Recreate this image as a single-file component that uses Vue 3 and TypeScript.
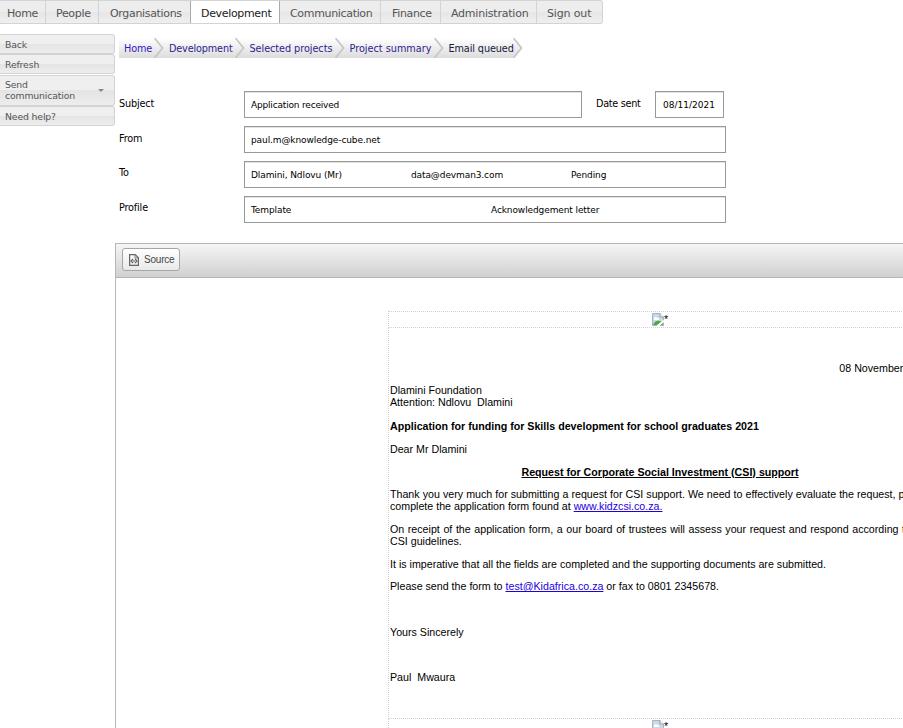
<script setup lang="ts">
interface NavItem {
  label: string
  key: string
  active?: boolean
}

const navItems: NavItem[] = [
  { label: 'Home', key: 'home' },
  { label: 'People', key: 'people' },
  { label: 'Organisations', key: 'organisations' },
  { label: 'Development', key: 'development', active: true },
  { label: 'Communication', key: 'communication' },
  { label: 'Finance', key: 'finance' },
  { label: 'Administration', key: 'administration' },
  { label: 'Sign out', key: 'signout' },
]

const crumbs: { label: string; key: string }[] = [
  { label: 'Home', key: 'home' },
  { label: 'Development', key: 'development' },
  { label: 'Selected projects', key: 'selected' },
  { label: 'Project summary', key: 'summary' },
  { label: 'Email queued', key: 'current' },
]
</script>

<template>
  <div class="page">
    <nav class="topnav">
      <a v-for="item in navItems" :key="item.key" class="tab" :class="['tab-' + item.key, { active: item.active }]">{{ item.label }}</a>
    </nav>

    <div class="body">
      <aside class="side">
        <a class="side-item">Back</a>
        <a class="side-item">Refresh</a>
        <a class="side-item tall">Send<br />communication<i class="caret"></i></a>
        <a class="side-item">Need help?</a>
      </aside>

      <main class="main">
        <div class="crumbs">
          <span v-for="c in crumbs" :key="c.key" class="crumb" :class="'crumb-' + c.key">
            <span class="crumb-text">{{ c.label }}</span>
            <svg class="chevron" width="10" height="20" viewBox="0 0 10 20">
              <path v-if="c.key === 'current'" d="M0 0L9 10L0 20H10V0Z" fill="#fff" />
              <path d="M0.5 0L8.5 10L0.5 20" fill="none" stroke="#c6c6c6" stroke-width="1.7" />
            </svg>
          </span>
        </div>

        <div class="form">
          <div class="row">
            <label class="label">Subject</label>
            <div class="field subject"><span>Application received</span></div>
            <label class="date-label">Date sent</label>
            <div class="field date"><span>08/11/2021</span></div>
          </div>
          <div class="row">
            <label class="label">From</label>
            <div class="field wide"><span>paul.m@knowledge-cube.net</span></div>
          </div>
          <div class="row">
            <label class="label up">To</label>
            <div class="field wide thirds"><span>Dlamini, Ndlovu (Mr)</span><span>data@devman3.com</span><span>Pending</span></div>
          </div>
          <div class="row">
            <label class="label up">Profile</label>
            <div class="field wide halves"><span>Template</span><span>Acknowledgement letter</span></div>
          </div>
        </div>

        <section class="editor">
          <div class="toolbar">
            <button class="source">
              <svg width="12" height="12" viewBox="0 0 12 12" fill="none" stroke="#666" stroke-width="1.2">
                <path d="M1.6 .6H7.2L10.4 3.8V11.4H1.6Z" />
                <path d="M7 1V4H10" stroke-width=".8" />
                <path d="M5 5L3 7L5 9M7 5L9 7L7 9" stroke-width="1.2" />
                <path d="M5.3 7H6.7" stroke-width="1.4" />
              </svg>
              <span>Source</span>
            </button>
          </div>
          <div class="canvas">
            <div class="letter">
              <div class="cell image-row">
                <svg class="broken" width="12" height="13" viewBox="0 0 12 13">
                  <path d="M.5 .5H8L11.5 4V8L5 12.5H.5Z" fill="#c8d8f0" />
                  <path d="M2 5.5Q3 3 5 4.5L7 5.5V7H2Z" fill="#fff" />
                  <path d="M1 12Q3 7 8 8L10 9L5 12.5H1Z" fill="#4dab3a" />
                  <path d="M8 12.5L11.5 9V12.5Z" fill="#6daf5e" />
                  <path d="M.5 12.5V.5H8L11.5 4V7.5M11.5 10V12.5H8M.5 12.5H5" fill="none" stroke="#aeb1b5" />
                  <path d="M8 .5V4H11.5" fill="#fff" stroke="#999" />
                  <path d="M5 13L12 7.7" stroke="#fff" stroke-width="1.5" />
                </svg><span>*</span>
              </div>
              <div class="cell content">
                <p class="right">08 November 2021</p>
                <p class="address">Dlamini Foundation<br />Attention: Ndlovu&nbsp; Dlamini</p>
                <p><b>Application for funding for Skills development for school graduates 2021</b></p>
                <p>Dear Mr Dlamini</p>
                <p class="center"><b><u>Request for Corporate Social Investment (CSI) support</u></b></p>
                <p>Thank you very much for submitting a request for CSI support. We need to effectively evaluate the request, please complete the application form found at <a>www.kidzcsi.co.za.</a></p>
                <p>On receipt of the application form, a our board of trustees will assess your request and respond according to our CSI guidelines.</p>
                <p>It is imperative that all the fields are completed and the supporting documents are submitted.</p>
                <p>Please send the form to <a>test@Kidafrica.co.za</a> or fax to 0801 2345678.</p>
                <p>&nbsp;</p>
                <p>Yours Sincerely</p>
                <p>&nbsp;</p>
                <p>Paul&nbsp; Mwaura</p>
              </div>
              <div class="cell image-row">
                <svg class="broken" width="12" height="13" viewBox="0 0 12 13">
                  <path d="M.5 .5H8L11.5 4V12.5H.5Z" fill="#c8d8f0" stroke="#aeb1b5" />
                  <path d="M2 5.5Q3 3 5 4.5L7 5.5V7H2Z" fill="#fff" />
                  <path d="M8 .5V4H11.5" fill="#fff" stroke="#999" />
                </svg><span>*</span>
              </div>
            </div>
          </div>
        </section>
      </main>
    </div>
  </div>
</template>

<style>
body {
  margin: 0;
  overflow: hidden;
  background: #fff;
}
</style>

<style scoped>
* {
  box-sizing: border-box;
}
.page {
  width: 903px;
  height: 728px;
  overflow: hidden;
  font-family: 'DejaVu Sans', Verdana, sans-serif;
  color: #000;
}
.topnav {
  display: flex;
  width: 603px;
  height: 24px;
  border: 1px solid #d3d3d3;
  border-left: 0;
  border-radius: 0 3px 3px 0;
  background: linear-gradient(#ededed 0 50%, #e6e6e6 50%, #efefef);
  overflow: hidden;
}
.tab {
  flex: none;
  height: 24px;
  margin-top: -1px;
  padding-left: 10px;
  border-right: 1px solid #d3d3d3;
  font-size: 11px;
  letter-spacing: -0.33px;
  line-height: 27px;
  color: #555;
  white-space: nowrap;
}
.tab-home { width: 46px; padding-left: 7px; letter-spacing: -0.4px; }
.tab-people { width: 53px; }
.tab-organisations { width: 92px; border-right: 0; padding-left: 11px; }
.tab-development { width: 90px; margin-left: -1px; }
.tab-communication { width: 101px; }
.tab-finance { width: 60px; padding-left: 11px; }
.tab-administration { width: 96px; letter-spacing: -0.22px; }
.tab-signout { width: 66px; border-right: 0; letter-spacing: -0.15px; }
.tab.active {
  border: 1px solid #aaa;
  background: #fff;
  color: #212121;
  line-height: 25px;
}
.body {
  display: flex;
}
.side {
  flex: none;
  width: 115px;
  padding-top: 10px;
}
.side-item {
  display: flex;
  align-items: center;
  position: relative;
  height: 20px;
  padding: 1px 0 0 5px;
  border: 1px solid #d3d3d3;
  border-left: 0;
  border-radius: 0 3px 3px 0;
  background: linear-gradient(#efefef 0 50%, #e4e4e4 50%, #ededed);
  font-size: 9.3px;
  letter-spacing: -0.14px;
  line-height: 11px;
  color: #555;
}
.side-item + .side-item {
  margin-top: .3px;
}
.side-item.tall {
  height: 31px;
  padding-top: 0;
}
.caret {
  position: absolute;
  right: 10px;
  top: 13px;
  border: 3px solid transparent;
  border-top-color: #888;
}
.main {
  flex: none;
  width: 800px;
}
.crumbs {
  display: flex;
  height: 20px;
  width: 404px;
  margin: 14px 0 0 4px;
  background: linear-gradient(#fff, #dcdcdc);
}
.crumb {
  display: flex;
  flex: none;
  justify-content: space-between;
  font-size: 9.7px;
  letter-spacing: -0.1px;
  line-height: 21px;
  color: #2d1d91;
  white-space: nowrap;
}
.crumb-home { width: 45px; padding-left: 5px; color: #3516c4; }
.crumb-development { width: 81px; padding-left: 5px; letter-spacing: -0.15px; }
.crumb-selected { width: 100px; padding-left: 4.5px; letter-spacing: -0.05px; }
.crumb-summary { width: 99px; padding-left: 4.5px; letter-spacing: 0; }
.crumb-current { width: 79px; padding-left: 4.5px; color: #14203c; }
.crumb-text {
  width: 0;
}
.chevron {
  flex: none;
}
.form {
  padding: 33px 0 0 4px;
}
.row {
  display: flex;
  align-items: flex-start;
  height: 35px;
}
.label {
  width: 125px;
  padding-top: 6px;
  font-size: 9.7px;
  letter-spacing: -0.17px;
  line-height: 13px;
}
.label.up {
  padding-top: 5px;
}
.field {
  display: flex;
  align-items: center;
  height: 27px;
  padding: 1px 0 0 6px;
  border: 1px solid #999;
  box-shadow: inset 0 1px 0 #e2e2e2;
  font-size: 9px;
  letter-spacing: -0.1px;
  white-space: nowrap;
}
.field span { flex: none; }
.subject { width: 338px; letter-spacing: -0.18px; }
.date { width: 69px; padding-left: 7px; letter-spacing: 0; }
.wide { width: 482px; }
.date-label {
  width: 73px;
  padding: 6px 0 0 14px;
  font-size: 9.7px;
  letter-spacing: -0.3px;
  line-height: 13px;
  white-space: nowrap;
}
.thirds span { width: 160px; }
.halves span { width: 240px; }
.editor {
  margin-top: 12px;
  border: 1px solid #b6b6b6;
  height: 600px;
}
.toolbar {
  height: 34px;
  padding: 4px 6px;
  border-bottom: 1px solid #b6b6b6;
  background: linear-gradient(#f5f5f5, #cfd1cf);
}
.source {
  display: flex;
  align-items: center;
  gap: 4px;
  width: 58px;
  height: 23px;
  padding: 0 0 0 5px;
  border: 1px solid #a6a6a6;
  border-radius: 3px;
  background: linear-gradient(#fff, #e9e9e9);
  font-family: 'Liberation Sans', Arial, sans-serif;
  font-size: 10px;
  letter-spacing: -0.2px;
  color: #474747;
}
.canvas {
  padding: 33px 0 0 272px;
}
.letter {
  width: 544px;
  font-family: 'Liberation Sans', Arial, sans-serif;
  font-size: 10.667px;
  line-height: 12px;
}
.cell {
  border: 1px dotted #d0d0d0;
}
.cell + .cell {
  border-top: 0;
}
.image-row {
  display: flex;
  justify-content: center;
  height: 17px;
  padding-top: 1px;
}
.broken {
  flex: none;
}
.content {
  height: 391px;
  padding: 33.6px 1px 0;
}
.content p {
  margin: 0 0 10.667px;
  text-align: justify;
}
.content .right { text-align: right; }
.content .address { margin-bottom: 12px; text-align: left; }
.content .center { text-align: center; }
.content a {
  color: #2200dd;
  text-decoration: underline;
}
</style>
